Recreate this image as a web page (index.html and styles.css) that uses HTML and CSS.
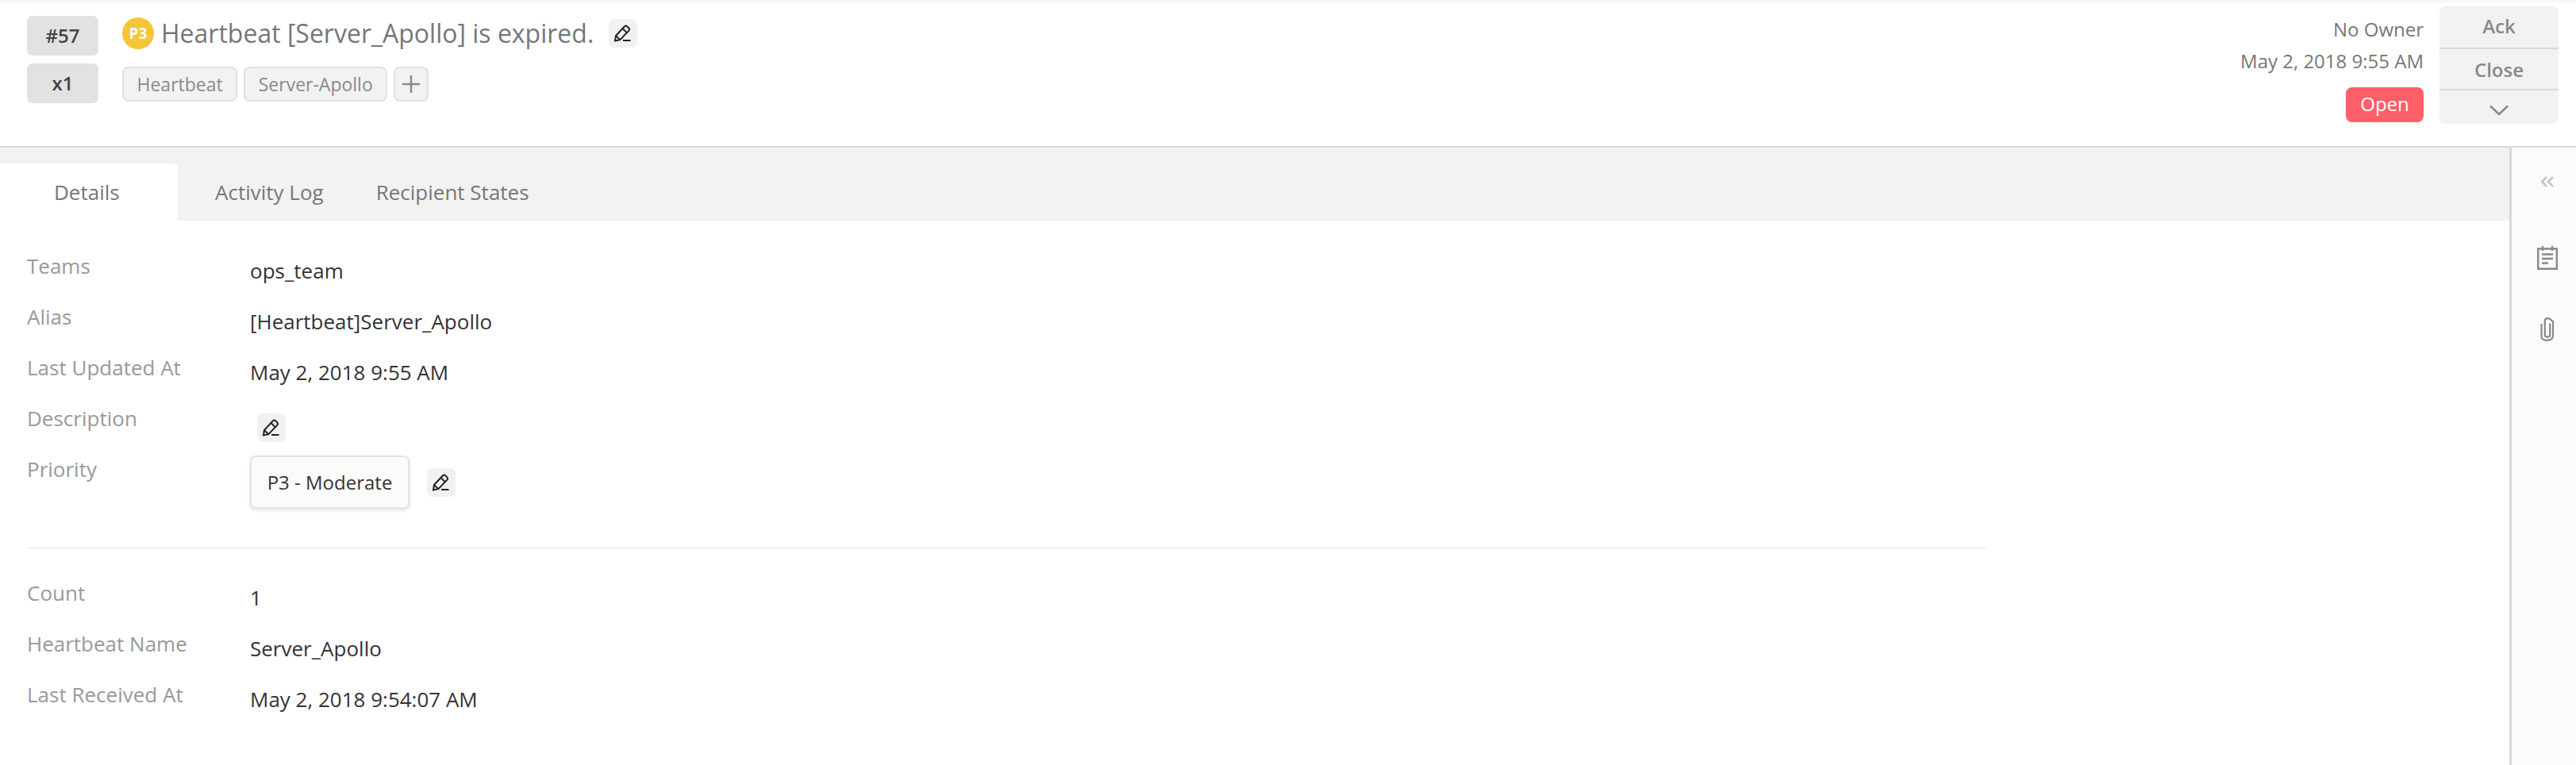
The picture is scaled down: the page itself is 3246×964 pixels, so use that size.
FILE: index.html
```html
<!DOCTYPE html>
<html>
<head>
  <title>Alert #57</title>
  <link rel="stylesheet" href="styles.css">
</head>
<body>

  <!-- Alert header -->
  <div class="header">
    <div class="counts">
      <div class="count-box">#57</div>
      <div class="count-box">x1</div>
    </div>
    <div class="summary">
      <div class="title-row">
        <span class="priority-dot">P3</span>
        <h1 class="title">Heartbeat [Server_Apollo] is expired.</h1>
        <button class="edit-btn">
          <svg class="pen" viewBox="0 0 36 36"><path d="M8 27.5 9 21 20 9.2q1.6-1.4 3.2 0l2.2 2.2q1.4 1.6 0 3.2L14.4 26.2Z"/><path d="M17.6 12l5.6 5.6M9.4 21.4l4.8 4.6M18 27h9.5"/></svg>
        </button>
      </div>
      <div class="tag-row">
        <span class="tag">Heartbeat</span>
        <span class="tag">Server-Apollo</span>
        <span class="tag tag-add">
          <svg class="plus" viewBox="0 0 24 24"><path d="M12 1v22M1 12h22"/></svg>
        </span>
      </div>
    </div>
    <div class="meta">
      <div class="meta-line">No Owner</div>
      <div class="meta-line">May 2, 2018 9:55 AM</div>
      <span class="status">Open</span>
    </div>
    <div class="actions">
      <div class="action action-ack">Ack</div>
      <div class="action action-close">Close</div>
      <div class="action action-more">
        <svg class="chevron" viewBox="0 0 24 14"><path d="M1 1.5 12 12 23 1.5"/></svg>
      </div>
    </div>
  </div>

  <div class="main">
    <div class="content">
      <div class="tabs">
        <div class="tab active">Details</div>
        <div class="tab tab-log">Activity Log</div>
        <div class="tab tab-states">Recipient States</div>
      </div>

      <div class="details">
        <div class="row">
          <div class="label">Teams</div>
          <div class="value">ops_team</div>
        </div>
        <div class="row">
          <div class="label">Alias</div>
          <div class="value">[Heartbeat]Server_Apollo</div>
        </div>
        <div class="row">
          <div class="label">Last Updated At</div>
          <div class="value">May 2, 2018 9:55 AM</div>
        </div>
        <div class="row">
          <div class="label">Description</div>
          <div class="value value-desc">
            <button class="edit-btn">
              <svg class="pen" viewBox="0 0 36 36"><path d="M8 27.5 9 21 20 9.2q1.6-1.4 3.2 0l2.2 2.2q1.4 1.6 0 3.2L14.4 26.2Z"/><path d="M17.6 12l5.6 5.6M9.4 21.4l4.8 4.6M18 27h9.5"/></svg>
            </button>
          </div>
        </div>
        <div class="row row-priority">
          <div class="label">Priority</div>
          <div class="value value-priority">
            <span class="priority-box">P3 - Moderate</span>
            <button class="edit-btn">
              <svg class="pen" viewBox="0 0 36 36"><path d="M8 27.5 9 21 20 9.2q1.6-1.4 3.2 0l2.2 2.2q1.4 1.6 0 3.2L14.4 26.2Z"/><path d="M17.6 12l5.6 5.6M9.4 21.4l4.8 4.6M18 27h9.5"/></svg>
            </button>
          </div>
        </div>

        <div class="divider"></div>

        <div class="row">
          <div class="label">Count</div>
          <div class="value">1</div>
        </div>
        <div class="row">
          <div class="label">Heartbeat Name</div>
          <div class="value">Server_Apollo</div>
        </div>
        <div class="row">
          <div class="label">Last Received At</div>
          <div class="value">May 2, 2018 9:54:07 AM</div>
        </div>
      </div>
    </div>

    <!-- Right rail -->
    <div class="rail">
      <svg class="rail-collapse" viewBox="0 0 18 14"><path d="M8 1 2 7l6 6M16 1l-6 6 6 6"/></svg>
      <svg class="rail-notes" viewBox="0 0 26 30"><path d="M1.2 3.500h23.600v25.300H1.200Z"/><path d="M7 0v6M19 0v6M6 10.500h14M6 16h14M6 21.500h8"/></svg>
      <svg class="rail-clip" viewBox="0 0 18 30"><path d="M12.200 7.500v14.200q0 3-3.200 3t-3.200-3V5.500Q5.800 1.200 9 1.200t7 4.300v17q0 6.300-7.500 6.300T1.500 22.500V8"/></svg>
    </div>
  </div>

</body>
</html>
```

FILE: styles.css
```css
html, body {
  height: 100%;
}
body {
  margin: 0;
  font-family: "Open Sans", Arial, sans-serif;
  font-size: 24px;
  background-color: white;
  color: #333;
  overflow: hidden;
  display: flex;
  flex-direction: column;
}
h1 {
  margin: 0;
  font-weight: normal;
}
button {
  border: none;
  padding: 0;
  font: inherit;
}

/* header */
.header {
  height: 186px;
  flex-shrink: 0;
  display: flex;
  padding: 8px 22px 0 34px;
  box-sizing: border-box;
  border-bottom: 2px solid #d9d9d9;
  background: linear-gradient(#f5f5f5, white 5px);
}
.counts {
  width: 90px;
  padding-top: 12px;
  display: flex;
  flex-direction: column;
  gap: 10px;
}
.count-box {
  height: 50px;
  line-height: 50px;
  border-radius: 7px;
  background-color: #e2e2e2;
  text-align: center;
  font-weight: 600;
  color: #444;
}
.summary {
  flex: 1;
  padding: 14px 0 0 30px;
}
.title-row {
  display: flex;
  align-items: center;
  height: 40px;
}
.priority-dot {
  width: 40px;
  height: 40px;
  border-radius: 50%;
  background-color: #f4c636;
  color: white;
  font-size: 19px;
  font-weight: 700;
  line-height: 40px;
  text-align: center;
  flex-shrink: 0;
}
.title {
  font-size: 32px;
  line-height: 40px;
  color: #777;
  margin: 0 19px 0 9px;
}
.edit-btn {
  width: 36px;
  height: 36px;
  border-radius: 8px;
  background-color: #f1f1f1;
  display: block;
  flex-shrink: 0;
}
.pen {
  display: block;
  width: 36px;
  height: 36px;
  fill: none;
  stroke: #222;
  stroke-width: 2;
}
.tag-row {
  display: flex;
  gap: 8px;
  margin-top: 22px;
}
.tag {
  height: 44px;
  line-height: 40px;
  box-sizing: border-box;
  padding: 0 16.5px;
  border: 2px solid #e0e0e0;
  border-radius: 8px;
  background-color: #f2f2f2;
  font-size: 23px;
  color: #8a8a8a;
}
.tag-add {
  width: 44px;
  padding: 0;
  display: flex;
  align-items: center;
  justify-content: center;
}
.plus {
  width: 24px;
  height: 24px;
  fill: none;
  stroke: #8a8a8a;
  stroke-width: 2.5;
}

.meta {
  text-align: right;
  margin-right: 20px;
  color: #777;
  padding-top: 12px;
}
.meta-line {
  height: 40px;
  line-height: 34px;
}
.status {
  display: inline-block;
  margin-top: 10px;
  width: 98px;
  height: 44px;
  line-height: 42px;
  border-radius: 8px;
  background-color: #ff5f69;
  color: white;
  text-align: center;
  font-weight: 500;
}
.actions {
  width: 150px;
  height: 148px;
  border-radius: 7px;
  background-color: #f2f2f2;
  display: flex;
  flex-direction: column;
  color: #888;
  font-weight: 600;
}
.action {
  display: flex;
  align-items: center;
  justify-content: center;
  box-sizing: border-box;
  border-bottom: 2px solid #d9d9d9;
}
.action-ack {
  height: 54px;
  padding-bottom: 3px;
}
.action-close {
  height: 52px;
}
.action-more {
  flex: 1;
  border-bottom: none;
  padding-top: 8px;
}
.chevron {
  width: 24px;
  height: 14px;
  fill: none;
  stroke: #888;
  stroke-width: 2.5;
}

/* tabs and details */
.main {
  flex: 1;
  display: flex;
  min-height: 0;
  font-size: 26px;
}
.content {
  flex: 1;
}
.tabs {
  height: 92px;
  box-sizing: border-box;
  padding-top: 20px;
  background-color: #f2f2f2;
  display: flex;
  color: #777;
}
.tab {
  height: 72px;
  line-height: 72px;
}
.tab.active {
  width: 224px;
  background-color: white;
  border-top-right-radius: 6px;
  padding-left: 68px;
  box-sizing: border-box;
}
.tab-log {
  margin-left: 47px;
}
.tab-states {
  margin-left: 66px;
}
.details {
  padding: 40px 0 0 34px;
  width: 2468px;
}
.row {
  display: flex;
  height: 64px;
}
.label {
  width: 281px;
  color: #999;
  line-height: 34px;
}
.value {
  line-height: 46px;
}
.value-desc {
  padding: 11px 0 0 9px;
}
.row-priority {
  height: 116px;
}
.value-priority {
  display: flex;
  align-items: center;
  gap: 22px;
  height: 67px;
}
.priority-box {
  width: 201px;
  height: 67px;
  line-height: 63px;
  box-sizing: border-box;
  text-align: center;
  border: 2px solid #e4e4e4;
  border-radius: 7px;
  background-color: #fbfbfb;
  box-shadow: 0 2px 4px rgba(0, 0, 0, 0.12);
  font-size: 24px;
}
.divider {
  height: 2px;
  background-color: #f0f0f0;
  margin-bottom: 38px;
}

/* right rail */
.rail {
  width: 84px;
  flex-shrink: 0;
  border-left: 3px solid #d9d9d9;
  background-color: #fbfbfb;
  display: flex;
  flex-direction: column;
  align-items: center;
  padding: 36px 0 0 9px;
  box-sizing: border-box;
}
.rail svg {
  display: block;
  fill: none;
}
.rail-collapse {
  width: 18px;
  height: 14px;
  stroke: #c4c4c4;
  stroke-width: 2.5;
}
.rail-notes {
  width: 26px;
  height: 30px;
  margin-top: 74px;
  stroke: #888;
  stroke-width: 2.4;
}
.rail-clip {
  width: 18px;
  height: 30px;
  margin-top: 60px;
  stroke: #888;
  stroke-width: 2.2;
}
```
